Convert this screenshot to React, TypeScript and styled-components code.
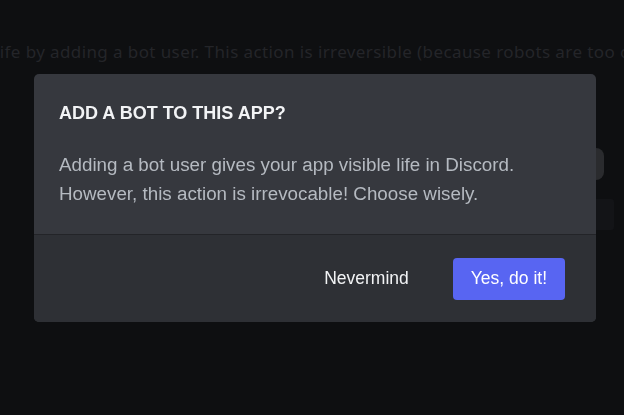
import React from 'react'
import styled, { createGlobalStyle } from 'styled-components'

const GlobalStyle = createGlobalStyle`
  html, body {
    margin: 0;
    padding: 0;
    background: #0e0f11;
    font-family: 'Liberation Sans', Arial, sans-serif;
    overflow: hidden;
  }
`

// dimmed page behind the modal
const Page = styled.div`
  width: 624px;
  height: 415px;
  display: flex;
  flex-direction: column;
  padding-top: 41px;
  box-sizing: border-box;
  overflow: hidden;
`

const BgText = styled.p`
  margin: 0 0 0 -5px;
  font-family: 'Noto Sans', sans-serif;
  font-size: 17px;
  letter-spacing: 0.4px;
  line-height: 22px;
  color: #242529;
  white-space: nowrap;
`

const BgPill = styled.div`
  align-self: flex-end;
  margin: 85px 20px 0 0;
  width: 120px;
  height: 32px;
  border-radius: 8px;
  background: #2a2b2e;
`

const BgCard = styled.div`
  align-self: flex-end;
  margin: 19px 10px 0 0;
  width: 200px;
  height: 31px;
  border-radius: 3px;
  background: #131417;
`

const Overlay = styled.div`
  position: fixed;
  inset: 0;
  display: flex;
  align-items: flex-start;
  padding: 74px 0 0 34px;
`

const Modal = styled.div`
  width: 562px;
  border-radius: 5px;
  overflow: hidden;
  background: #36383e;
  display: flex;
  flex-direction: column;
`

const Header = styled.div`
  padding: 28px 25px 0;
`

const Title = styled.h1`
  margin: 0;
  font-size: 18px;
  line-height: 22px;
  font-weight: 700;
  color: #f2f3f5;
  text-transform: uppercase;
`

const Body = styled.div`
  padding: 27px 25px 26px;
`

const Text = styled.p`
  margin: 0;
  font-size: 18.8px;
  line-height: 28.6px;
  color: #b5bac1;
`

const Footer = styled.div`
  border-top: 1px solid #232428;
  background: #2e3035;
  height: 87px;
  display: flex;
  align-items: center;
  justify-content: flex-end;
  gap: 26px;
  padding: 0 31px;
`

const Button = styled.button<{ $primary?: boolean }>`
  height: 42px;
  padding: 0 18px;
  border: none;
  border-radius: 4px;
  font-family: 'Liberation Sans', Arial, sans-serif;
  font-size: 17.5px;
  color: ${p => (p.$primary ? '#ffffff' : '#f2f3f5')};
  background: ${p => (p.$primary ? '#5865f2' : 'transparent')};
  cursor: pointer;
`

export default function App() {
  return (
    <>
      <GlobalStyle />
      <Page>
        <BgText>
          life by adding a bot user. This action is irreversible (because robots are too cool).
        </BgText>
        <BgPill />
        <BgCard />
      </Page>
      <Overlay>
        <Modal>
          <Header>
            <Title>Add a bot to this app?</Title>
          </Header>
          <Body>
            <Text>
              Adding a bot user gives your app visible life in Discord.
              <br />
              However, this action is irrevocable! Choose wisely.
            </Text>
          </Body>
          <Footer>
            <Button>Nevermind</Button>
            <Button $primary>Yes, do it!</Button>
          </Footer>
        </Modal>
      </Overlay>
    </>
  )
}
